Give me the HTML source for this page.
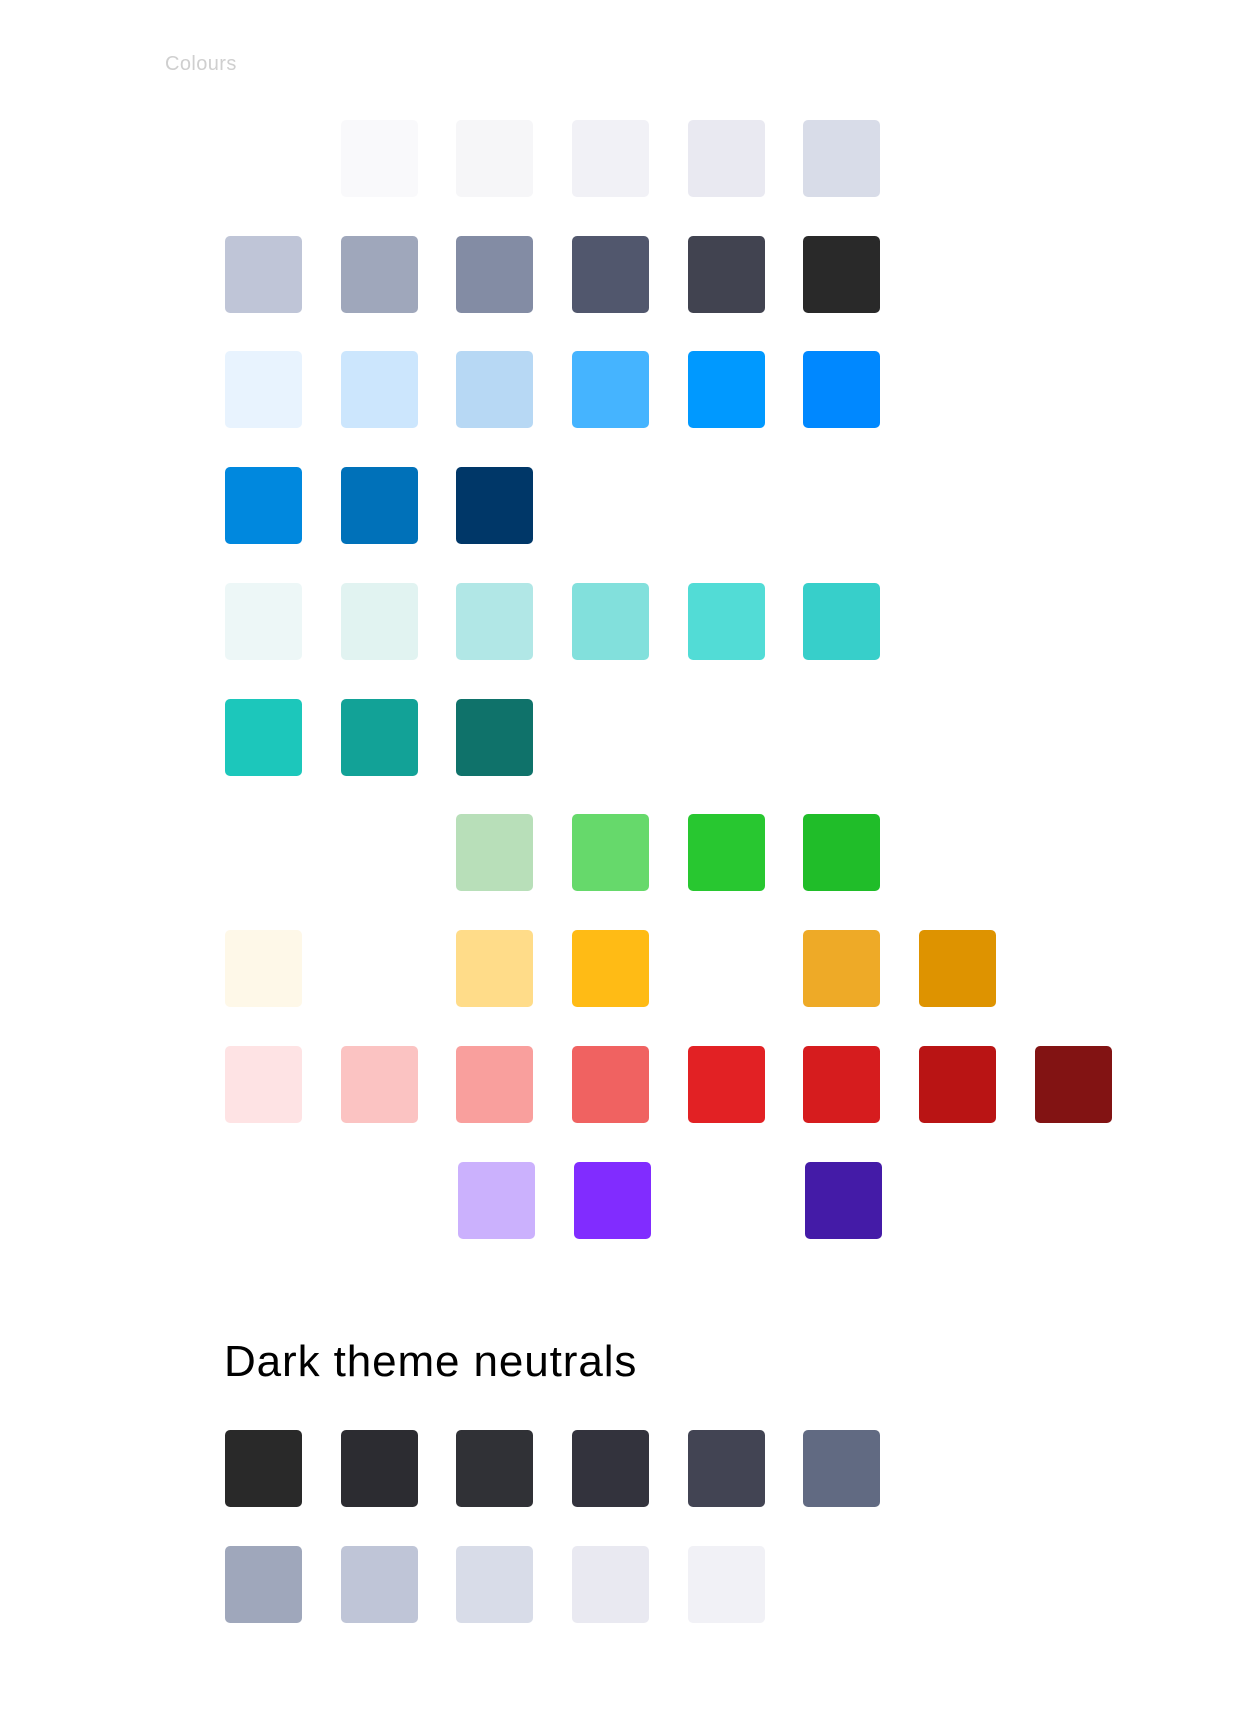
<!DOCTYPE html>
<html><head><meta charset="utf-8"><style>
html,body{margin:0;padding:0;background:#fff;width:1234px;height:1710px;overflow:hidden;position:relative}
.s{position:absolute;width:77px;height:77px;border-radius:5px}
.t{position:absolute;font-family:"Liberation Sans",sans-serif}
</style></head><body>
<div class="t" style="left:165px;top:53px;font-size:20px;letter-spacing:0.4px;color:#cfcfcf">Colours</div>
<!-- row1 -->
<div class="s" style="left:341px;top:120px;background:#f9f9fb"></div>
<div class="s" style="left:456px;top:120px;background:#f6f6f8"></div>
<div class="s" style="left:572px;top:120px;background:#f1f1f6"></div>
<div class="s" style="left:688px;top:120px;background:#e9e9f1"></div>
<div class="s" style="left:803px;top:120px;background:#d8dce8"></div>
<!-- row2 -->
<div class="s" style="left:225px;top:236px;background:#bfc5d7"></div>
<div class="s" style="left:341px;top:236px;background:#9fa7bb"></div>
<div class="s" style="left:456px;top:236px;background:#838ca4"></div>
<div class="s" style="left:572px;top:236px;background:#51576d"></div>
<div class="s" style="left:688px;top:236px;background:#414350"></div>
<div class="s" style="left:803px;top:236px;background:#292929"></div>
<!-- row3 -->
<div class="s" style="left:225px;top:351px;background:#e8f3fe"></div>
<div class="s" style="left:341px;top:351px;background:#cce6fd"></div>
<div class="s" style="left:456px;top:351px;background:#b7d8f4"></div>
<div class="s" style="left:572px;top:351px;background:#45b4ff"></div>
<div class="s" style="left:688px;top:351px;background:#0099ff"></div>
<div class="s" style="left:803px;top:351px;background:#0088ff"></div>
<!-- row4 -->
<div class="s" style="left:225px;top:467px;background:#0088de"></div>
<div class="s" style="left:341px;top:467px;background:#0071b9"></div>
<div class="s" style="left:456px;top:467px;background:#003768"></div>
<!-- row5 -->
<div class="s" style="left:225px;top:583px;background:#edf7f7"></div>
<div class="s" style="left:341px;top:583px;background:#e1f3f1"></div>
<div class="s" style="left:456px;top:583px;background:#b1e7e6"></div>
<div class="s" style="left:572px;top:583px;background:#82e0dc"></div>
<div class="s" style="left:688px;top:583px;background:#52dcd6"></div>
<div class="s" style="left:803px;top:583px;background:#37cfca"></div>
<!-- row6 -->
<div class="s" style="left:225px;top:699px;background:#1cc7bb"></div>
<div class="s" style="left:341px;top:699px;background:#12a297"></div>
<div class="s" style="left:456px;top:699px;background:#0f726a"></div>
<!-- row7 -->
<div class="s" style="left:456px;top:814px;background:#b8dfb9"></div>
<div class="s" style="left:572px;top:814px;background:#66d96b"></div>
<div class="s" style="left:688px;top:814px;background:#28c730"></div>
<div class="s" style="left:803px;top:814px;background:#20bd29"></div>
<!-- row8 -->
<div class="s" style="left:225px;top:930px;background:#fef8e8"></div>
<div class="s" style="left:456px;top:930px;background:#ffdc89"></div>
<div class="s" style="left:572px;top:930px;background:#ffbb15"></div>
<div class="s" style="left:803px;top:930px;background:#eeaa27"></div>
<div class="s" style="left:919px;top:930px;background:#de9300"></div>
<!-- row9 -->
<div class="s" style="left:225px;top:1046px;background:#fee3e4"></div>
<div class="s" style="left:341px;top:1046px;background:#fbc3c2"></div>
<div class="s" style="left:456px;top:1046px;background:#f99f9d"></div>
<div class="s" style="left:572px;top:1046px;background:#f06261"></div>
<div class="s" style="left:688px;top:1046px;background:#e22124"></div>
<div class="s" style="left:803px;top:1046px;background:#d61c1e"></div>
<div class="s" style="left:919px;top:1046px;background:#b91414"></div>
<div class="s" style="left:1035px;top:1046px;background:#821313"></div>
<!-- row10 -->
<div class="s" style="left:458px;top:1162px;background:#cbb1fd"></div>
<div class="s" style="left:574px;top:1162px;background:#812cff"></div>
<div class="s" style="left:805px;top:1162px;background:#441ba7"></div>

<div class="t" style="left:224px;top:1337px;font-size:44px;line-height:50px;letter-spacing:0.9px;color:#000">Dark theme neutrals</div>
<div class="s" style="left:225px;top:1430px;background:#292929"></div>
<div class="s" style="left:341px;top:1430px;background:#2c2c31"></div>
<div class="s" style="left:456px;top:1430px;background:#303136"></div>
<div class="s" style="left:572px;top:1430px;background:#33333d"></div>
<div class="s" style="left:688px;top:1430px;background:#424453"></div>
<div class="s" style="left:803px;top:1430px;background:#616a82"></div>
<div class="s" style="left:225px;top:1546px;background:#9fa7bb"></div>
<div class="s" style="left:341px;top:1546px;background:#bfc5d7"></div>
<div class="s" style="left:456px;top:1546px;background:#d8dce8"></div>
<div class="s" style="left:572px;top:1546px;background:#e9e9f1"></div>
<div class="s" style="left:688px;top:1546px;background:#f1f1f6"></div>
</body></html>
